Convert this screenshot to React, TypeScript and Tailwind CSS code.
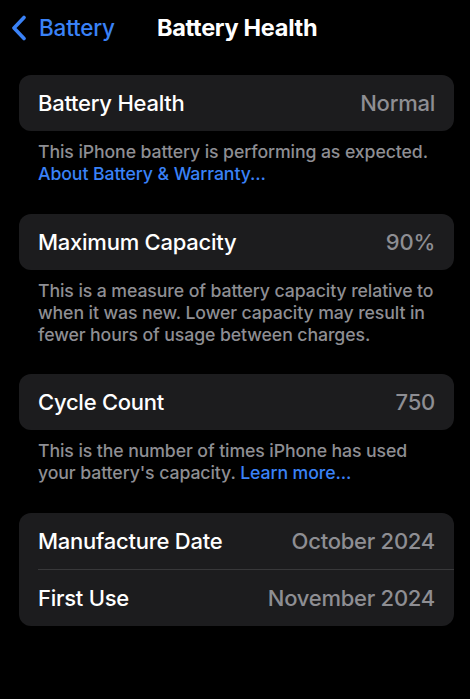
import React from "react";

const FONT = { fontFamily: "Inter, 'Noto Sans', sans-serif" };

function Chevron() {
  return (
    <svg width="16" height="26" viewBox="0 0 16 26" className="shrink-0">
      <path
        d="M13 2.5 L3 13 L13 23.5"
        fill="none"
        stroke="#3a82f7"
        strokeWidth="3.6"
        strokeLinecap="round"
        strokeLinejoin="round"
      />
    </svg>
  );
}

function Row({ label, value }: { label: string; value: string }) {
  return (
    <div className="h-[56px] flex items-center justify-between pr-[19px]">
      <span className="text-white text-[22px] font-medium tracking-[-0.25px]">{label}</span>
      <span className="text-[#8e8e93] text-[22px] font-medium tracking-[-0.25px]">{value}</span>
    </div>
  );
}

function Card({ children }: { children: React.ReactNode }) {
  return (
    <div className="ml-[19px] mr-[16px] bg-[#1c1c1e] rounded-[12px] pl-[19px] overflow-hidden">
      {children}
    </div>
  );
}

function Footer({ children }: { children: React.ReactNode }) {
  return (
    <p className="mt-[10px] pl-[38px] pr-[33px] text-[17.7px] font-medium leading-[22px] text-[#8e8e93] tracking-[-0.1px]">
      {children}
    </p>
  );
}

export default function App() {
  return (
    <div className="min-h-[699px] w-full bg-black" style={FONT}>
      {/* nav bar */}
      <div className="h-[56px] flex items-center relative">
        <div className="flex items-center gap-[12px] pl-[11px]">
          <Chevron />
          <span className="text-[#3a82f7] text-[22.5px] font-medium tracking-[-0.2px]">Battery</span>
        </div>
        <span className="absolute left-[157px] text-white text-[23.5px] font-bold tracking-[-0.3px]">
          Battery Health
        </span>
      </div>

      <div className="mt-[19px]">
        <Card>
          <Row label="Battery Health" value="Normal" />
        </Card>
        <Footer>
          This iPhone battery is performing as expected.{" "}
          <span className="text-[#3a82f7]">About Battery &amp; Warranty...</span>
        </Footer>
      </div>

      <div className="mt-[29px]">
        <Card>
          <Row label="Maximum Capacity" value="90%" />
        </Card>
        <Footer>
          This is a measure of battery capacity relative to when it was new. Lower capacity may
          result in fewer hours of usage between charges.
        </Footer>
      </div>

      <div className="mt-[28px]">
        <Card>
          <Row label="Cycle Count" value="750" />
        </Card>
        <Footer>
          This is the number of times iPhone has used your battery's capacity.{" "}
          <span className="text-[#3a82f7]">Learn more...</span>
        </Footer>
      </div>

      <div className="mt-[29px]">
        <Card>
          <Row label="Manufacture Date" value="October 2024" />
          <div className="h-px bg-[#38383a]" />
          <Row label="First Use" value="November 2024" />
        </Card>
      </div>
    </div>
  );
}
